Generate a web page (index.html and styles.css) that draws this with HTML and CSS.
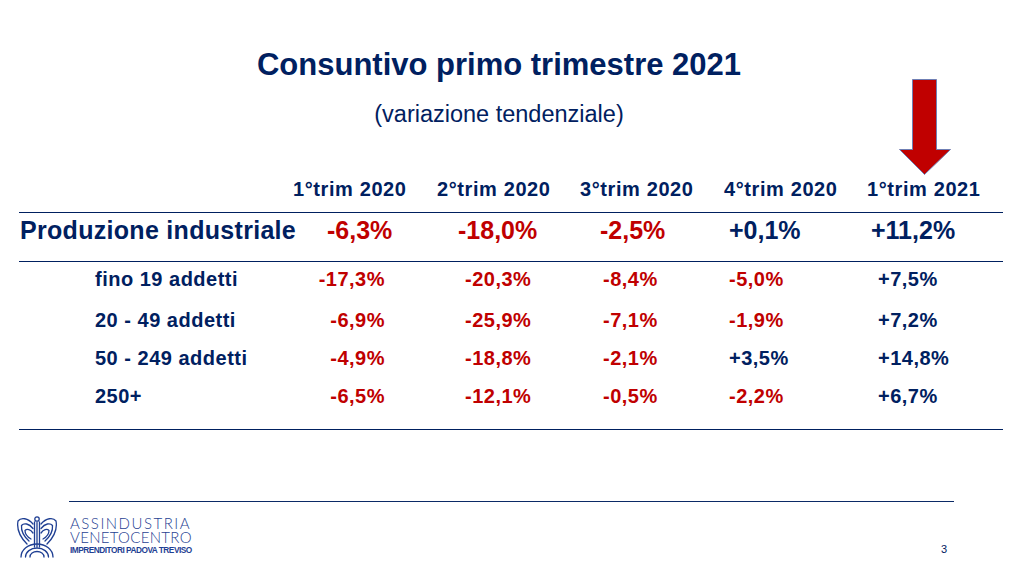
FILE: index.html
```html
<!DOCTYPE html>
<html lang="it">
<head>
<meta charset="utf-8">
<title>Consuntivo primo trimestre 2021</title>
<link rel="stylesheet" href="styles.css">
</head>
<body>
<div class="slide">
  <h1 class="title">Consuntivo primo trimestre 2021</h1>
  <p class="subtitle">(variazione tendenziale)</p>

  <svg class="arrow" width="53" height="97" viewBox="0 0 53 97" aria-hidden="true">
    <path d="M13.5 0.5 H37.5 V70.5 H51.5 L25.5 95.5 L0.5 70.5 H13.5 Z" fill="#C00000" stroke="#6f7fb4" stroke-width="1"/>
  </svg>

  <div class="table">
    <div class="row head">
      <div class="cell"></div>
      <div class="cell">1°trim 2020</div>
      <div class="cell">2°trim 2020</div>
      <div class="cell">3°trim 2020</div>
      <div class="cell">4°trim 2020</div>
      <div class="cell">1°trim 2021</div>
    </div>
    <div class="row main">
      <div class="cell label">Produzione industriale</div>
      <div class="cell c1 neg">-6,3%</div>
      <div class="cell c2 neg">-18,0%</div>
      <div class="cell c3 neg">-2,5%</div>
      <div class="cell c4 pos">+0,1%</div>
      <div class="cell c5 pos">+11,2%</div>
    </div>
    <div class="subs">
      <div class="row sub">
        <div class="cell label">fino 19 addetti</div>
        <div class="cell c1 neg">-17,3%</div>
        <div class="cell c2 neg">-20,3%</div>
        <div class="cell c3 neg">-8,4%</div>
        <div class="cell c4 neg">-5,0%</div>
        <div class="cell c5 pos">+7,5%</div>
      </div>
      <div class="row sub">
        <div class="cell label">20 - 49 addetti</div>
        <div class="cell c1 neg">-6,9%</div>
        <div class="cell c2 neg">-25,9%</div>
        <div class="cell c3 neg">-7,1%</div>
        <div class="cell c4 neg">-1,9%</div>
        <div class="cell c5 pos">+7,2%</div>
      </div>
      <div class="row sub">
        <div class="cell label">50 - 249 addetti</div>
        <div class="cell c1 neg">-4,9%</div>
        <div class="cell c2 neg">-18,8%</div>
        <div class="cell c3 neg">-2,1%</div>
        <div class="cell c4 pos">+3,5%</div>
        <div class="cell c5 pos">+14,8%</div>
      </div>
      <div class="row sub">
        <div class="cell label">250+</div>
        <div class="cell c1 neg">-6,5%</div>
        <div class="cell c2 neg">-12,1%</div>
        <div class="cell c3 neg">-0,5%</div>
        <div class="cell c4 neg">-2,2%</div>
        <div class="cell c5 pos">+6,7%</div>
      </div>
    </div>
  </div>

  <div class="footer-line"></div>
  <div class="footer">
    <div class="logo">
      <svg class="eagle" width="42" height="42" viewBox="0 0 42 42" aria-hidden="true">
        <g fill="none" stroke="#1f3f93" stroke-width="1.3" stroke-linecap="round">
          <circle cx="21" cy="3" r="2.2"/>
          <path d="M18.5 6 V31 M21 6.5 V31 M23.5 6 V31"/>
          <path d="M17 8 C12 2 5 1 2 5 C0.5 13 4 21 11 28"/>
          <path d="M17 12.5 C13 7.5 8 6.5 5.5 9.5 C5 15 8 20.5 13 25"/>
          <path d="M17 17 C14.5 13.5 11 12.5 9 14.5 C9 18 11.5 21 15 23"/>
          <path d="M25 8 C30 2 37 1 40 5 C41.5 13 38 21 31 28"/>
          <path d="M25 12.5 C29 7.5 34 6.5 36.5 9.5 C37 15 34 20.5 29 25"/>
          <path d="M25 17 C27.5 13.5 31 12.5 33 14.5 C33 18 30.5 21 27 23"/>
          <path d="M5 41 A16 13 0 0 1 37 41"/>
          <path d="M9.5 41 A11.5 9 0 0 1 32.5 41"/>
          <path d="M14 41 A7 5.5 0 0 1 28 41"/>
        </g>
      </svg>
      <div class="brand">
        <span class="brand-l1">ASSINDUSTRIA</span>
        <span class="brand-l2">VENETOCENTRO</span>
        <span class="brand-l3">IMPRENDITORI PADOVA TREVISO</span>
      </div>
    </div>
    <span class="page">3</span>
  </div>
</div>
</body>
</html>
```

FILE: styles.css
```css
html, body {
  margin: 0;
  padding: 0;
  background: #ffffff;
}

.slide {
  position: relative;
  width: 1023px;
  height: 577px;
  overflow: hidden;
  font-family: "Liberation Sans", Arial, sans-serif;
  color: #002060;
}

.title {
  margin: 0;
  padding: 47px 25px 0 0;
  font-size: 31px;
  line-height: 36px;
  font-weight: 700;
  text-align: center;
  color: #002060;
}

.subtitle {
  margin: 17px 0 0 0;
  padding-right: 25px;
  font-size: 23.5px;
  line-height: 28px;
  font-weight: 400;
  text-align: center;
  color: #002060;
}

.arrow {
  position: absolute;
  left: 899px;
  top: 79px;
}

.table {
  margin: 49px 0 0 19px;
  width: 984px;
}

.row {
  display: grid;
  grid-template-columns: 274px 144px 143px 144px 143px 136px;
  font-weight: 700;
  white-space: nowrap;
}

.head {
  font-size: 20px;
  line-height: 24px;
  letter-spacing: 0.6px;
  padding-bottom: 11px;
  border-bottom: 1px solid #002060;
}

.main {
  font-size: 25px;
  line-height: 30px;
  padding: 2px 0 16px 0;
  border-bottom: 1px solid #002060;
}

.main .label {
  padding-left: 1px;
  letter-spacing: 0.3px;
}
.main .c1 { padding-left: 34px; }
.main .c2 { padding-left: 21px; }
.main .c3 { padding-left: 20px; }
.main .c4 { padding-left: 5px; }
.main .c5 { padding-left: 4px; }

.subs {
  display: flex;
  flex-direction: column;
  gap: 14px;
  padding: 5px 0 21px 0;
  border-bottom: 1px solid #002060;
}

.sub {
  font-size: 20px;
  line-height: 24px;
  letter-spacing: 0.5px;
}

.sub:first-child { margin-bottom: 3px; }

.sub .label { padding-left: 76px; }
.sub .c1 { text-align: right; padding-right: 52px; }
.sub .c2 { padding-left: 28px; }
.sub .c3 { padding-left: 23px; }
.sub .c4 { padding-left: 5px; }
.sub .c5 { padding-left: 11px; }

.neg { color: #C00000; }
.pos { color: #002060; }

.footer-line {
  margin: 71px 0 0 69px;
  width: 885px;
  height: 1px;
  background: #0b2a66;
}

.footer {
  display: flex;
  justify-content: space-between;
  align-items: flex-end;
  padding: 14px 76px 0 16px;
}

.logo {
  display: flex;
  align-items: flex-start;
  gap: 12px;
}

.eagle {
  display: block;
}

.brand {
  display: flex;
  flex-direction: column;
  color: #1f3f93;
}

.brand-l1, .brand-l2 {
  font-family: Lato, "Open Sans", sans-serif;
  font-weight: 300;
  font-size: 15px;
  line-height: 14px;
}

.brand-l1 { letter-spacing: 1.5px; }
.brand-l2 { letter-spacing: 0.3px; }

.brand-l3 {
  margin-top: 2px;
  font-family: "Liberation Sans", Arial, sans-serif;
  font-weight: 700;
  font-size: 8.3px;
  line-height: 9px;
  letter-spacing: -0.5px;
}

.page {
  font-family: "Liberation Sans", Arial, sans-serif;
  font-size: 11px;
  line-height: 12px;
  color: #002060;
  padding-bottom: 3px;
}
```
